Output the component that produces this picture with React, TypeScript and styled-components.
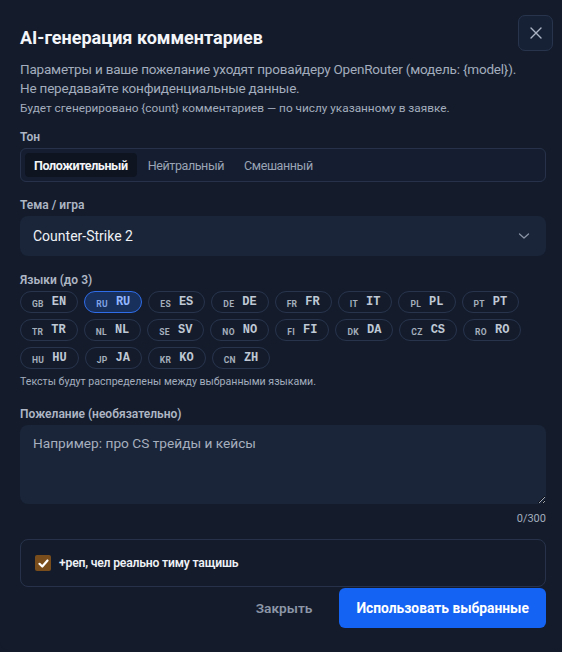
import styled, { createGlobalStyle } from "styled-components";

const GlobalStyle = createGlobalStyle`
  html, body {
    margin: 0;
    padding: 0;
    background: #141c2c;
  }
  body {
    font-family: Roboto, "Noto Sans", sans-serif;
    color: #e6eaf0;
  }
  * { box-sizing: border-box; }
`;

const Modal = styled.div`
  width: 562px;
  height: 650px;
  background: #141c2c;
  border-radius: 0 0 8px 8px;
  padding: 15px 16px 0 20px;
  display: flex;
  flex-direction: column;
`;

const Header = styled.div`
  display: flex;
  justify-content: space-between;
  align-items: flex-start;
  margin-right: -7px;
`;

const CloseButton = styled.button`
  width: 35px;
  height: 36px;
  border-radius: 7px;
  border: 1px solid #27344c;
  background: #172136;
  color: #aab4c4;
  display: flex;
  align-items: center;
  justify-content: center;
  padding: 0;
`;

const Title = styled.h2`
  margin: 11px 0 0;
  font-size: 18px;
  font-weight: 700;
  color: #f3f5f8;
  line-height: 24px;
`;

const Description = styled.p`
  margin: 9px 0 0;
  font-size: 13.5px;
  letter-spacing: -0.2px;
  line-height: 19px;
  color: #a3adbd;
`;

const Note = styled.p`
  margin: 0;
  font-size: 11.8px;
  line-height: 20px;
  color: #a3adbd;
`;

const Label = styled.div<{ $top: number }>`
  margin-top: ${(p) => p.$top}px;
  padding-top: 2px;
  font-size: 12px;
  font-weight: 600;
  line-height: 16px;
  color: #aeb6c4;
`;

const Segmented = styled.div`
  margin-top: 3px;
  height: 34px;
  border: 1px solid #27324a;
  border-radius: 6px;
  background: #151e30;
  display: flex;
  align-items: center;
  padding: 0 4px;
  gap: 2px;
`;

const Segment = styled.button<{ $active?: boolean }>`
  height: 24px;
  padding: 0 9px;
  border: none;
  border-radius: 4px;
  font-family: inherit;
  font-size: 12.5px;
  letter-spacing: -0.4px;
  font-weight: ${(p) => (p.$active ? 700 : 400)};
  color: ${(p) => (p.$active ? "#f2f4f7" : "#9aa4b5")};
  background: ${(p) => (p.$active ? "#0e1420" : "transparent")};
`;

const Select = styled.div`
  margin-top: 3px;
  height: 40px;
  border-radius: 8px;
  background: #1a2539;
  display: flex;
  align-items: center;
  justify-content: space-between;
  padding: 0 16px 0 13px;
  font-size: 14px;
  color: #eef1f5;
`;

const Chips = styled.div`
  margin-top: 3px;
  display: flex;
  flex-wrap: wrap;
  gap: 6px;
`;

const Chip = styled.button<{ $selected?: boolean }>`
  height: 22px;
  border-radius: 11px;
  border: 1px solid ${(p) => (p.$selected ? "#2f6ce8" : "#28344c")};
  background: ${(p) => (p.$selected ? "#17305c" : "#141c2c")};
  display: flex;
  align-items: center;
  gap: 8px;
  padding: 0 11px;
  color: ${(p) => (p.$selected ? "#93b6ff" : "#bfc8d4")};
`;

const Flag = styled.span`
  font-family: Roboto, sans-serif;
  font-size: 8.5px;
  font-weight: 700;
  letter-spacing: 0.3px;
  margin-top: 3px;
  opacity: 0.85;
`;

const Code = styled.span`
  font-family: "Liberation Mono", monospace;
  font-size: 12px;
  font-weight: 700;
`;

const Hint = styled.div`
  margin-top: 5px;
  font-size: 10.6px;
  line-height: 16px;
  color: #a3adbd;
`;

const TextArea = styled.textarea`
  margin-top: 3px;
  width: 100%;
  height: 79px;
  border: none;
  border-radius: 8px;
  background: #1a2539;
  padding: 10px 13px;
  font-family: inherit;
  font-size: 13.7px;
  color: #eef1f5;
  outline: none;
  &::placeholder {
    color: #a6afbe;
  }
`;

const Counter = styled.div`
  margin-top: 7px;
  text-align: right;
  font-size: 11px;
  line-height: 16px;
  color: #a3adbd;
`;

const CheckCard = styled.label`
  margin-top: 12px;
  height: 48px;
  border: 1px solid #27324a;
  border-radius: 8px;
  display: flex;
  align-items: center;
  gap: 8px;
  padding: 0 14px;
  font-size: 12.2px;
  letter-spacing: -0.2px;
  font-weight: 600;
  color: #eef1f5;
`;

const CheckBox = styled.span`
  width: 16px;
  height: 16px;
  border-radius: 2px;
  background: #7a4e1c;
  display: flex;
  align-items: center;
  justify-content: center;
`;

const Footer = styled.div`
  display: flex;
  justify-content: flex-end;
  align-items: center;
  gap: 27px;
  margin-top: 1px;
`;

const GhostButton = styled.button`
  border: none;
  background: transparent;
  font-family: inherit;
  font-size: 13.7px;
  font-weight: 600;
  color: #8c96a7;
  padding: 0;
`;

const PrimaryButton = styled.button`
  height: 40px;
  padding: 0 17px;
  border: none;
  border-radius: 6px;
  background: #1463f3;
  font-family: inherit;
  font-size: 13.8px;
  font-weight: 700;
  color: #ffffff;
`;

const languages = [
  ["GB", "EN"],
  ["RU", "RU"],
  ["ES", "ES"],
  ["DE", "DE"],
  ["FR", "FR"],
  ["IT", "IT"],
  ["PL", "PL"],
  ["PT", "PT"],
  ["TR", "TR"],
  ["NL", "NL"],
  ["SE", "SV"],
  ["NO", "NO"],
  ["FI", "FI"],
  ["DK", "DA"],
  ["CZ", "CS"],
  ["RO", "RO"],
  ["HU", "HU"],
  ["JP", "JA"],
  ["KR", "KO"],
  ["CN", "ZH"],
];

export default function App() {
  return (
    <>
      <GlobalStyle />
      <Modal>
        <Header>
          <Title>AI-генерация комментариев</Title>
          <CloseButton aria-label="Закрыть">
            <svg width="14" height="14" viewBox="0 0 14 14" fill="none" stroke="currentColor" strokeWidth="1.4" strokeLinecap="round">
              <path d="M2 2l10 10M12 2L2 12" />
            </svg>
          </CloseButton>
        </Header>
        <Description>
          Параметры и ваше пожелание уходят провайдеру OpenRouter (модель: {"{model}"}).
          <br />
          Не передавайте конфиденциальные данные.
        </Description>
        <Note>Будет сгенерировано {"{count}"} комментариев — по числу указанному в заявке.</Note>

        <Label $top={9}>Тон</Label>
        <Segmented>
          <Segment $active>Положительный</Segment>
          <Segment>Нейтральный</Segment>
          <Segment>Смешанный</Segment>
        </Segmented>

        <Label $top={13}>Тема / игра</Label>
        <Select>
          Counter-Strike 2
          <svg width="12" height="8" viewBox="0 0 12 8" fill="none" stroke="#8a94a6" strokeWidth="1.3" strokeLinecap="round" strokeLinejoin="round">
            <path d="M1.5 2l4.5 4 4.5-4" />
          </svg>
        </Select>

        <Label $top={14}>Языки (до 3)</Label>
        <Chips>
          {languages.map(([flag, code]) => (
            <Chip key={code} $selected={code === "RU"}>
              <Flag>{flag}</Flag>
              <Code>{code}</Code>
            </Chip>
          ))}
        </Chips>
        <Hint>Тексты будут распределены между выбранными языками.</Hint>

        <Label $top={14}>Пожелание (необязательно)</Label>
        <TextArea placeholder="Например: про CS трейды и кейсы" />
        <Counter>0/300</Counter>

        <CheckCard>
          <CheckBox>
            <svg width="11" height="9" viewBox="0 0 11 9" fill="none" stroke="#ffffff" strokeWidth="2.2" strokeLinecap="round" strokeLinejoin="round">
              <path d="M1.5 4.8l2.8 2.7L9.5 1.5" />
            </svg>
          </CheckBox>
          +реп, чел реально тиму тащишь
        </CheckCard>

        <Footer>
          <GhostButton>Закрыть</GhostButton>
          <PrimaryButton>Использовать выбранные</PrimaryButton>
        </Footer>
      </Modal>
    </>
  );
}
